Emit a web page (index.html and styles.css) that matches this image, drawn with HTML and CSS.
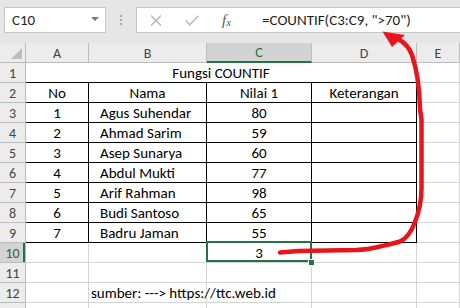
FILE: index.html
```html
<!DOCTYPE html>
<html>
<head>
<meta charset="utf-8">
<link rel="stylesheet" href="styles.css">
</head>
<body>
<div class="app">
  <div class="bar">
    <div class="namebox"><span class="name">C10</span><span class="caret"></span></div>
    <div class="dots"><i></i><i></i><i></i></div>
    <div class="fbox">
      <svg class="ico" width="12" height="11" viewBox="0 0 12 11"><path d="M1 0.5 L11 10.5 M11 0.5 L1 10.5" stroke="#b4b4b4" stroke-width="1.4" fill="none"/></svg>
      <svg class="ico chk" width="14" height="11" viewBox="0 0 14 11"><path d="M0.8 5.5 L4.8 9.8 L13.2 0.8" stroke="#bdbdbd" stroke-width="1.6" fill="none"/></svg>
      <span class="fx">f<span class="sub">x</span></span>
      <span class="formula">=COUNTIF(C3:C9, "&gt;70")</span>
    </div>
  </div>
  <div class="grid">
    <div class="h corner"><span class="tri"></span></div>
    <div class="h">A</div>
    <div class="h">B</div>
    <div class="h sel">C</div>
    <div class="h">D</div>
    <div class="h">E</div>

    <div class="rh">1</div>
    <div class="c merge ctr">Fungsi COUNTIF</div>
    <div class="c"></div>

    <div class="rh">2</div>
    <div class="c t ctr">No</div>
    <div class="c t ctr">Nama</div>
    <div class="c t ctr">Nilai 1</div>
    <div class="c t ctr">Keterangan</div>
    <div class="c"></div>

    <div class="rh">3</div>
    <div class="c t ctr">1</div>
    <div class="c t name">Agus Suhendar</div>
    <div class="c t ctr">80</div>
    <div class="c t"></div>
    <div class="c"></div>

    <div class="rh">4</div>
    <div class="c t ctr">2</div>
    <div class="c t name">Ahmad Sarim</div>
    <div class="c t ctr">59</div>
    <div class="c t"></div>
    <div class="c"></div>

    <div class="rh">5</div>
    <div class="c t ctr">3</div>
    <div class="c t name">Asep Sunarya</div>
    <div class="c t ctr">60</div>
    <div class="c t"></div>
    <div class="c"></div>

    <div class="rh">6</div>
    <div class="c t ctr">4</div>
    <div class="c t name">Abdul Mukti</div>
    <div class="c t ctr">77</div>
    <div class="c t"></div>
    <div class="c"></div>

    <div class="rh">7</div>
    <div class="c t ctr">5</div>
    <div class="c t name">Arif Rahman</div>
    <div class="c t ctr">98</div>
    <div class="c t"></div>
    <div class="c"></div>

    <div class="rh">8</div>
    <div class="c t ctr">6</div>
    <div class="c t name">Budi Santoso</div>
    <div class="c t ctr">65</div>
    <div class="c t"></div>
    <div class="c"></div>

    <div class="rh">9</div>
    <div class="c t ctr">7</div>
    <div class="c t name">Badru Jaman</div>
    <div class="c t ctr">55</div>
    <div class="c t"></div>
    <div class="c"></div>

    <div class="rh rsel">10</div>
    <div class="c"></div>
    <div class="c"></div>
    <div class="c ctr active">3</div>
    <div class="c"></div>
    <div class="c"></div>

    <div class="rh">11</div>
    <div class="c"></div>
    <div class="c"></div>
    <div class="c"></div>
    <div class="c"></div>
    <div class="c"></div>

    <div class="rh">12</div>
    <div class="c"></div>
    <div class="c src">sumber: ---&gt; https://ttc.web.id</div>
    <div class="c"></div>
    <div class="c"></div>
    <div class="c"></div>

    <div class="rh"></div>
    <div class="c"></div>
    <div class="c"></div>
    <div class="c"></div>
    <div class="c"></div>
    <div class="c"></div>
  </div>
  <svg class="arrow" width="460" height="308" viewBox="0 0 460 308">
    <path d="M280,252.5 L298,251 L356,250 C366,249.5 372,248.5 378,247 C386,245 394,243.5 400,241.5 C408,238 412,230 415,222 C419,212 421.5,200 421.5,188 L421.5,120 C421.5,116 420,112 420,108 C419.5,90 417,70 412,55 C409,47 405,43 399,39.5" stroke="#e8161b" stroke-width="4.5" fill="none" stroke-linecap="round" stroke-linejoin="round"/>
    <polygon points="382.5,31.5 405,35 392,47" fill="#e8161b"/>
  </svg>
</div>
</body>
</html>
```
FILE: styles.css
```css
html, body {
  margin: 0;
  padding: 0;
  background: #ffffff;
}
.app {
  position: relative;
  width: 460px;
  height: 308px;
  overflow: hidden;
  font-family: Carlito, Calibri, Lato, "Liberation Sans", sans-serif;
}
.bar {
  height: 43px;
  background: #e6e6e6;
  display: flex;
  align-items: flex-start;
  padding-top: 7px;
  box-sizing: border-box;
}
.namebox {
  margin-left: 4px;
  width: 102px;
  height: 26px;
  box-sizing: border-box;
  background: #fff;
  border: 1px solid #c6c6c6;
  display: flex;
  align-items: center;
  justify-content: space-between;
  padding: 0 6px 0 7px;
}
.name {
  font-size: 15px;
  color: #262626;
}
.caret {
  width: 0;
  height: 0;
  border-left: 4px solid transparent;
  border-right: 4px solid transparent;
  border-top: 4px solid #777;
  margin-top: -3px;
}
.dots {
  width: 30px;
  height: 26px;
  display: flex;
  flex-direction: column;
  align-items: center;
  justify-content: center;
  gap: 2px;
}
.dots i {
  width: 2px;
  height: 2px;
  background: #a8a8a8;
}
.fbox {
  flex: 1;
  height: 26px;
  box-sizing: border-box;
  background: #fff;
  border: 1px solid #c6c6c6;
  border-right: none;
  display: flex;
  align-items: center;
  padding-left: 13px;
}
.ico {
  display: block;
}
.chk {
  margin-left: 23px;
}
.fx {
  margin-left: 23px;
  font-family: "Liberation Serif", serif;
  font-style: italic;
  font-size: 15px;
  color: #5a5a5a;
  line-height: 1;
}
.fx .sub {
  font-size: 11px;
  position: relative;
  top: 1px;
}
.formula {
  margin-left: 31px;
  font-size: 15px;
  color: #1a1a1a;
  white-space: nowrap;
}
.grid {
  display: grid;
  grid-template-columns: 26px 63px 118px 105px 105px 43px;
  grid-auto-rows: 20px;
}
.h, .rh {
  background: #ececec;
  border-right: 1px solid #bcbcbc;
  border-bottom: 1px solid #bcbcbc;
  box-sizing: border-box;
  color: #444;
  font-size: 14px;
  display: flex;
  align-items: center;
  justify-content: center;
  padding-top: 1px;
}
.corner {
  position: relative;
  align-items: flex-end;
  justify-content: flex-end;
  padding: 0 3px 3px 0;
}
.tri {
  width: 0;
  height: 0;
  border-left: 11px solid transparent;
  border-bottom: 11px solid #bdbdbd;
}
.h.sel {
  background: #d3d3d3;
  color: #1e6e41;
  border-bottom: 2px solid #217346;
}
.rh.rsel {
  background: #d3d3d3;
  color: #4a5a30;
  box-shadow: inset -2px 0 0 #217346;
}
.c {
  border-right: 1px solid #d4d4d4;
  border-bottom: 1px solid #d4d4d4;
  box-sizing: border-box;
  font-size: 15px;
  color: #000;
  display: flex;
  align-items: flex-end;
  line-height: 16px;
  padding-bottom: 1px;
  white-space: nowrap;
  position: relative;
}
.c.t {
  border-right-color: #000;
  border-bottom-color: #000;
}
.merge {
  grid-column: span 4;
  border-bottom-color: #000;
}
.ctr {
  justify-content: center;
}
.c.name {
  padding-left: 11px;
}
.src {
  padding-left: 2px;
  overflow: visible;
  z-index: 1;
}
.active::after {
  content: "";
  position: absolute;
  left: -1px;
  right: -1px;
  top: -2px;
  bottom: 0;
  border: 2px solid #217346;
}
.active::before {
  content: "";
  position: absolute;
  right: -4px;
  bottom: -4px;
  width: 5px;
  height: 5px;
  background: #217346;
  border: 1px solid #fff;
  z-index: 2;
}
.arrow {
  position: absolute;
  left: 0;
  top: 0;
  pointer-events: none;
}
```
